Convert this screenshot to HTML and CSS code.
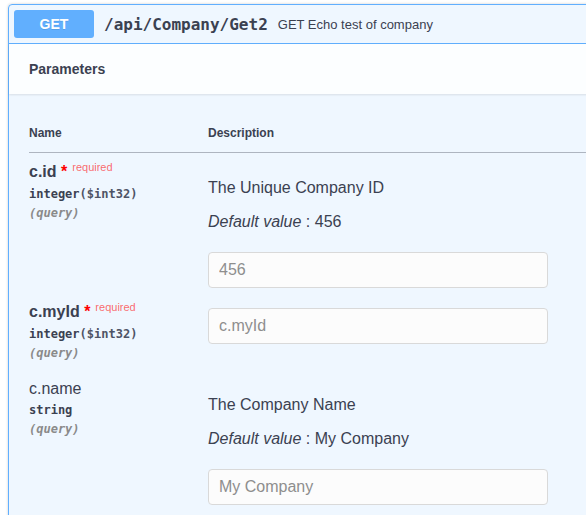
FILE: index.html
```html
<!DOCTYPE html>
<html lang="en">
<head>
<meta charset="utf-8">
<title>GET /api/Company/Get2</title>
<link rel="stylesheet" href="styles.css">
</head>
<body>
<div class="page">
  <div class="opblock">
    <div class="summary">
      <span class="method">GET</span>
      <span class="path">/api/Company/Get2</span>
      <span class="summary-desc">GET Echo test of company</span>
    </div>
    <div class="section-header">
      <h4 class="section-title">Parameters</h4>
    </div>
    <div class="table-container">
      <table class="parameters">
        <thead>
          <tr>
            <th class="col-name">Name</th>
            <th class="col-desc">Description</th>
          </tr>
        </thead>
        <tbody>
          <tr>
            <td class="col-name">
              <div class="param-name required">c.id<span class="star">&nbsp;*</span><span class="req">required</span></div>
              <div class="param-type">integer<span class="prop-format">($int32)</span></div>
              <div class="param-in">(query)</div>
            </td>
            <td class="col-desc">
              <div class="markdown">
                <p>The Unique Company ID</p>
                <p><i>Default value</i> : 456</p>
              </div>
              <input class="param-input" type="text" placeholder="456">
            </td>
          </tr>
          <tr>
            <td class="col-name">
              <div class="param-name required">c.myId<span class="star">&nbsp;*</span><span class="req">required</span></div>
              <div class="param-type">integer<span class="prop-format">($int32)</span></div>
              <div class="param-in">(query)</div>
            </td>
            <td class="col-desc">
              <input class="param-input" type="text" placeholder="c.myId">
            </td>
          </tr>
          <tr>
            <td class="col-name">
              <div class="param-name">c.name</div>
              <div class="param-type">string</div>
              <div class="param-in">(query)</div>
            </td>
            <td class="col-desc">
              <div class="markdown">
                <p>The Company Name</p>
                <p><i>Default value</i> : My Company</p>
              </div>
              <input class="param-input" type="text" placeholder="My Company">
            </td>
          </tr>
        </tbody>
      </table>
    </div>
  </div>
</div>
</body>
</html>
```
FILE: styles.css
```css
html, body {
  margin: 0;
  padding: 0;
  overflow: hidden;
  background: #fff;
}

body {
  font-family: "Liberation Sans", Arial, sans-serif;
  color: #3b4151;
}

.page {
  padding: 4px 0 0 8px;
  width: 900px;
}

.opblock {
  border: 1px solid #61affe;
  border-radius: 4px;
  background: rgba(97, 175, 254, 0.1);
  box-shadow: 0 0 3px rgba(0, 0, 0, 0.19);
}

.summary {
  display: flex;
  align-items: center;
  padding: 5px;
  border-bottom: 1px solid #61affe;
}

.method {
  display: block;
  min-width: 80px;
  padding: 6px 0;
  border-radius: 3px;
  background: #61affe;
  color: #fff;
  font-family: "Liberation Sans", Arial, sans-serif;
  font-size: 14px;
  font-weight: 700;
  line-height: 16px;
  text-align: center;
  text-shadow: 0 1px 0 rgba(0, 0, 0, 0.1);
}

.path {
  padding: 0 10px;
  font-family: "DejaVu Sans Mono", monospace;
  font-size: 16px;
  font-weight: 700;
  color: #3b4151;
}

.summary-desc {
  font-size: 13px;
  color: #3b4151;
}

.section-header {
  display: flex;
  align-items: center;
  min-height: 50px;
  padding: 0 20px;
  box-sizing: border-box;
  background: rgba(255, 255, 255, 0.8);
  box-shadow: 0 1px 2px rgba(0, 0, 0, 0.1);
}

.section-title {
  margin: 0;
  font-size: 14px;
  font-weight: 700;
  color: #3b4151;
}

.table-container {
  padding: 20px;
}

.parameters {
  width: 100%;
  border-collapse: collapse;
}

.parameters th {
  padding: 12px 0;
  font-size: 12px;
  font-weight: 700;
  line-height: 14px;
  text-align: left;
  color: #3b4151;
  border-bottom: 1px solid rgba(59, 65, 81, 0.2);
}

.parameters th.col-name,
.parameters td.col-name {
  width: 179px;
}

.parameters td {
  vertical-align: top;
  padding: 10px 0 0;
}

.parameters td.col-name {
  padding: 10px 0;
}

.param-name {
  font-size: 16px;
  line-height: 18px;
  font-weight: 400;
}

.param-name.required {
  font-weight: 700;
}

.star {
  color: red;
}

.req {
  position: relative;
  top: -6px;
  padding: 5px;
  font-size: 11px;
  font-weight: 400;
  color: rgba(255, 0, 0, 0.6);
}

.param-type {
  padding: 5px 0;
  font-family: "DejaVu Sans Mono", monospace;
  font-size: 12px;
  line-height: 14px;
  font-weight: 700;
  color: #3b4151;
}

.prop-format {
  color: #4e5466;
}

.param-in {
  font-family: "DejaVu Sans Mono", monospace;
  font-size: 12px;
  line-height: 14px;
  font-weight: 700;
  font-style: italic;
  color: #8a8a8a;
}

.markdown {
  display: flow-root;
}

.markdown p {
  margin: 16px 0;
  font-size: 16px;
  line-height: 18px;
  color: #3b4151;
}

.param-input {
  display: block;
  box-sizing: border-box;
  width: 340px;
  height: 36px;
  margin: 5px 0;
  padding: 8px 10px;
  border: 1px solid #d9d9d9;
  border-radius: 4px;
  background: #fcfcfc;
  font-family: "Liberation Sans", Arial, sans-serif;
  font-size: 16px;
  color: #3b4151;
  outline: none;
}

.param-input::placeholder {
  color: #8e8e8e;
}
```
